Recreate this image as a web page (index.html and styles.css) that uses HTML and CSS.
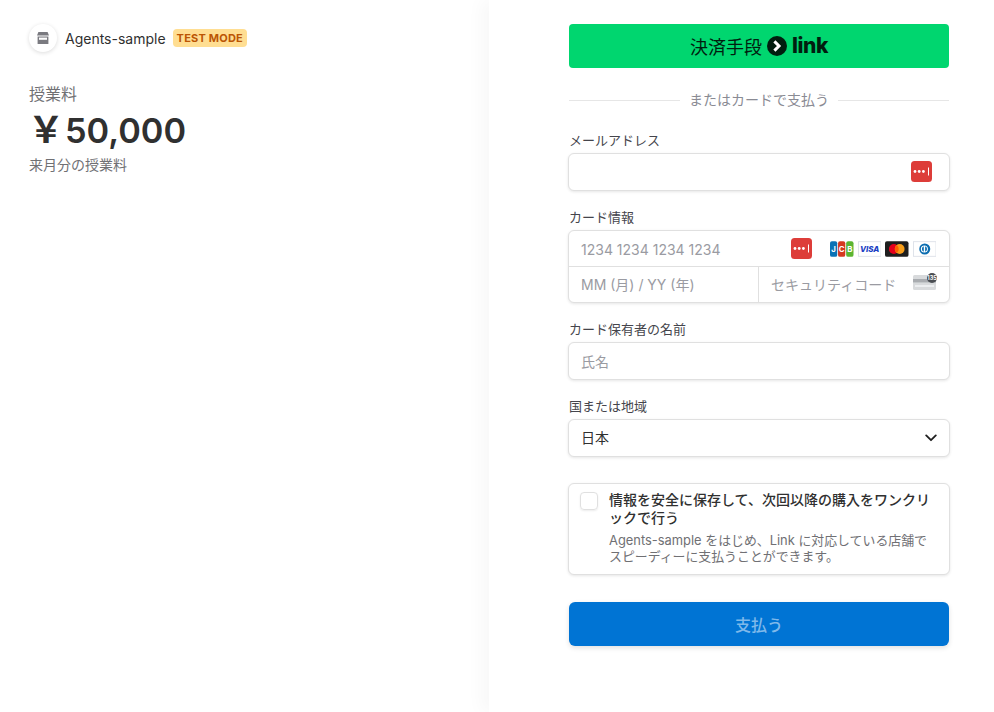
FILE: index.html
```html
<!DOCTYPE html>
<html lang="ja">
<head>
    <meta charset="UTF-8">
    <meta name="viewport" content="width=device-width, initial-scale=1.0">
    <title>Agents-sample</title>
    <link rel="stylesheet" href="styles.css">
</head>
<body>
    <div class="page">
        <section class="summary">
            <div class="merchant">
                <span class="merchant-icon">
                    <svg width="14" height="14" viewBox="0 0 14 14"><path fill="#7a7a80" d="M2.4 1h9.2L13 4.6H1zM1.6 5.6h10.8V13H1.6z"/><path fill="#fff" d="M3 6.6h8v2.2H3z"/></svg>
                </span>
                <span class="merchant-name">Agents-sample</span>
                <span class="test-badge">TEST MODE</span>
            </div>
            <p class="product">授業料</p>
            <p class="price"><span class="yen">￥</span>50,000</p>
            <p class="product-note">来月分の授業料</p>
        </section>

        <main class="checkout">
            <button class="link-button" type="button">
                <span>決済手段</span>
                <svg class="link-mark" width="20" height="20" viewBox="0 0 20 20"><circle cx="10" cy="10" r="10" fill="#011e0f"/><path fill="none" stroke="#fff" stroke-width="3" d="M7.4 5.4 12 10l-4.6 4.6"/></svg>
                <span class="link-word">link</span>
            </button>

            <div class="divider"><span>またはカードで支払う</span></div>

            <div class="field field-email">
                <label class="field-label">メールアドレス</label>
                <div class="box input-row">
                    <span class="placeholder"></span>
                    <svg class="pass-icon" width="21" height="21" viewBox="0 0 21 21"><use href="#pass"/></svg>
                </div>
            </div>

            <div class="field">
                <label class="field-label">カード情報</label>
                <div class="box card-box">
                    <div class="card-row">
                        <span class="placeholder">1234 1234 1234 1234</span>
                        <svg class="pass-icon card-pass" width="21" height="21" viewBox="0 0 21 21"><use href="#pass"/></svg>
                        <div class="brands">
                            <svg viewBox="0 0 24 16">
                                <rect width="7.4" height="16" rx="2" fill="#0b72b5"/>
                                <rect x="8.2" width="7.4" height="16" rx="2" fill="#d5381f"/>
                                <rect x="16.5" width="7.5" height="16" rx="2" fill="#5cb531"/>
                                <text x="3.7" y="11" class="jcb-letter">J</text>
                                <text x="11.9" y="11" class="jcb-letter">C</text>
                                <text x="20.2" y="11" class="jcb-letter">B</text>
                            </svg>
                            <svg viewBox="0 0 24 16">
                                <rect x="0.5" y="0.5" width="23" height="15" fill="#fff" stroke="#dfe3ea"/>
                                <text x="12" y="11" class="visa-letter">VISA</text>
                            </svg>
                            <svg viewBox="0 0 24 16">
                                <rect width="24" height="16" rx="2" fill="#1e1e1e"/>
                                <circle cx="9" cy="8" r="5" fill="#e5001c"/>
                                <circle cx="15" cy="8" r="5" fill="#f79e1b"/>
                                <path d="M12 4a5 5 0 0 1 0 8 5 5 0 0 1 0-8z" fill="#ff5f00"/>
                            </svg>
                            <svg viewBox="0 0 24 16">
                                <rect x="0.5" y="0.5" width="23" height="15" fill="#fff" stroke="#dfe3ea"/>
                                <circle cx="12" cy="8" r="5.6" fill="#0a6cb0"/>
                                <circle cx="11.6" cy="8" r="3.6" fill="#fff"/>
                                <path d="M11 5.2v5.6a3 3 0 0 1 0-5.6zM12.4 5.2a3 3 0 0 1 0 5.6z" fill="#0a6cb0"/>
                            </svg>
                        </div>
                    </div>
                    <div class="card-row card-row-split">
                        <div class="card-cell expiry">
                            <span class="placeholder">MM (月) / YY (年)</span>
                        </div>
                        <div class="card-cell cvc">
                            <span class="placeholder">セキュリティコード</span>
                            <svg class="cvc-icon" width="24" height="18" viewBox="0 0 24 18">
                                <rect y="2" width="23" height="15" rx="1.5" fill="#d8dadc"/>
                                <rect y="6" width="23" height="3.4" fill="#a9acb0"/>
                                <rect x="2" y="12" width="19" height="2" fill="#eceef0"/>
                                <circle cx="19" cy="5" r="5" fill="#4a4d52"/>
                                <text x="19" y="7" class="cvc-letter">135</text>
                            </svg>
                        </div>
                    </div>
                </div>
            </div>

            <div class="field">
                <label class="field-label">カード保有者の名前</label>
                <div class="box input-row">
                    <span class="placeholder">氏名</span>
                </div>
            </div>

            <div class="field">
                <label class="field-label">国または地域</label>
                <div class="box input-row select-row">
                    <span class="value">日本</span>
                    <svg width="12" height="8" viewBox="0 0 12 8"><path fill="none" stroke="#1f1f1f" stroke-width="1.8" stroke-linecap="round" stroke-linejoin="round" d="M1.2 1.4 6 6.2l4.8-4.8"/></svg>
                </div>
            </div>

            <div class="box save-box">
                <span class="checkbox"></span>
                <div class="save-text">
                    <p class="save-title">情報を安全に保存して、次回以降の購入をワンクリックで行う</p>
                    <p class="save-note">Agents-sample をはじめ、Link に対応している店舗でスピーディーに支払うことができます。</p>
                </div>
            </div>

            <button class="pay-button" type="button">支払う</button>
        </main>
    </div>

    <svg class="defs" width="0" height="0">
        <symbol id="pass" viewBox="0 0 21 21">
            <rect width="21" height="21" rx="3.5" fill="#dd3d39"/>
            <circle cx="4" cy="10.5" r="1.4" fill="#fff"/>
            <circle cx="8.2" cy="10.5" r="1.4" fill="#fff"/>
            <circle cx="12.4" cy="10.5" r="1.4" fill="#fff"/>
            <rect x="17" y="6.5" width="1" height="8" fill="#fff"/>
        </symbol>
    </svg>
</body>
</html>
```

FILE: styles.css
```css
* {
    box-sizing: border-box;
}
body {
    margin: 0;
    font-family: Inter, "Noto Sans CJK JP", sans-serif;
    color: #303030;
    background: #fff;
}
p {
    margin: 0;
}
.defs {
    display: none;
}
.page {
    display: flex;
    height: 712px;
    overflow: hidden;
}

/* left column */
.summary {
    width: 489px;
    padding: 23px 29px 0;
}
.merchant {
    display: flex;
    align-items: center;
    height: 30px;
}
.merchant-icon {
    display: flex;
    align-items: center;
    justify-content: center;
    width: 28px;
    height: 28px;
    border-radius: 50%;
    background: #fff;
    box-shadow: 0 1px 4px rgba(0, 0, 0, 0.14);
}
.merchant-name {
    margin-left: 8px;
    font-size: 14px;
    color: #303030;
}
.test-badge {
    margin-left: 7px;
    padding: 0 4px;
    height: 18px;
    line-height: 18px;
    border-radius: 4px;
    background: #ffde92;
    color: #bb5504;
    font-size: 11px;
    font-weight: 700;
    letter-spacing: 0.2px;
}
.product {
    margin-top: 30px;
    font-size: 16px;
    line-height: 22px;
    color: #707074;
}
.price {
    margin-top: 3px;
    font-size: 34.3px;
    line-height: 44px;
    font-weight: 600;
    color: #303030;
}
.yen {
    font-size: 36px;
    margin: 0 1px 0 -1px;
}
.product-note {
    margin-top: 2px;
    font-size: 14px;
    line-height: 20px;
    color: #707074;
}

/* right column */
.checkout {
    flex: 1;
    padding: 24px 45px 0 80px;
    background: #fff;
    box-shadow: -8px 0 16px rgba(0, 0, 0, 0.03);
}
.link-button {
    display: flex;
    align-items: center;
    justify-content: center;
    gap: 5px;
    width: 100%;
    height: 44px;
    border: 0;
    border-radius: 4px;
    background: #00d66f;
    color: #011e0f;
    font-family: inherit;
    font-size: 18px;
}
.link-word {
    font-size: 21px;
    font-weight: 800;
    letter-spacing: -0.4px;
    line-height: 20px;
    margin-top: -1px;
}
.divider {
    display: flex;
    align-items: center;
    gap: 9px;
    margin-top: 22px;
    height: 20px;
    font-size: 14px;
    color: #8a8b94;
}
.divider span {
    margin-top: -2px;
}
.divider::before,
.divider::after {
    content: "";
    flex: 1;
    height: 1px;
    background: #e6e6e6;
}
.field {
    margin-top: 16px;
}
.field-email {
    margin-top: 20px;
}
.field-label {
    display: block;
    font-size: 13px;
    line-height: 20px;
    margin-bottom: 3px;
    color: #45454c;
}
.box {
    margin: 0 -1px;
    background: #fff;
    border: 1px solid #e0e0e0;
    border-radius: 6px;
    box-shadow: 0 1px 3px rgba(0, 0, 0, 0.1);
}
.input-row {
    display: flex;
    align-items: center;
    height: 38px;
    padding: 0 12px;
}
.placeholder {
    flex: 1;
    font-size: 14px;
    color: #9a9ba2;
    white-space: nowrap;
}
.value {
    flex: 1;
    margin-bottom: 2px;
    font-size: 14px;
    color: #303030;
}
.pass-icon {
    margin: 0 5px 1px 0;
}
.card-box {
    height: 73px;
}
.card-row {
    display: flex;
    align-items: center;
    height: 36px;
    padding: 0 13px 0 12px;
    border-bottom: 1px solid #e0e0e0;
}
.card-row > .placeholder {
    margin-top: 1px;
}
.card-pass {
    margin: 0 18px 0 0;
}
.brands {
    display: flex;
    gap: 4px;
}
.brands svg {
    display: block;
    width: 23.5px;
    height: 16px;
}
.jcb-letter {
    font-size: 8px;
    font-weight: 700;
    fill: #fff;
    text-anchor: middle;
}
.visa-letter {
    font-size: 8px;
    font-weight: 800;
    font-style: italic;
    fill: #1a3fc4;
    text-anchor: middle;
}
.cvc-letter {
    font-size: 5.5px;
    font-weight: 700;
    fill: #fff;
    text-anchor: middle;
}
.card-row-split {
    height: 35px;
    padding: 0;
    border-bottom: 0;
}
.card-cell {
    display: flex;
    align-items: center;
    height: 35px;
    padding: 0 12px;
}
.card-cell .placeholder {
    margin-bottom: 2px;
}
.expiry {
    width: 190px;
    border-right: 1px solid #e0e0e0;
}
.cvc {
    flex: 1;
    padding-right: 12px;
}
.cvc-icon {
    margin-bottom: 5px;
}
.save-box {
    display: flex;
    height: 92px;
    margin-top: 26px;
    padding: 8px 12px 0 11px;
}
.checkbox {
    flex: none;
    width: 18px;
    height: 18px;
    border: 1px solid #e0e0e0;
    border-radius: 4px;
    box-shadow: 0 1px 2px rgba(0, 0, 0, 0.08);
}
.save-text {
    margin-left: 11px;
}
.save-title {
    margin-top: -1px;
    font-size: 14px;
    line-height: 18px;
    font-weight: 500;
    color: #303030;
}
.save-note {
    margin-top: 6px;
    font-size: 12.9px;
    line-height: 16px;
    color: #707074;
}
.pay-button {
    display: block;
    width: 100%;
    height: 44px;
    margin-top: 27px;
    padding-bottom: 2px;
    border: 0;
    border-radius: 6px;
    background: #0074d4;
    color: #7fb9ea;
    font-family: inherit;
    font-size: 16px;
    font-weight: 500;
    box-shadow: 0 2px 5px rgba(0, 0, 0, 0.12);
}
```
